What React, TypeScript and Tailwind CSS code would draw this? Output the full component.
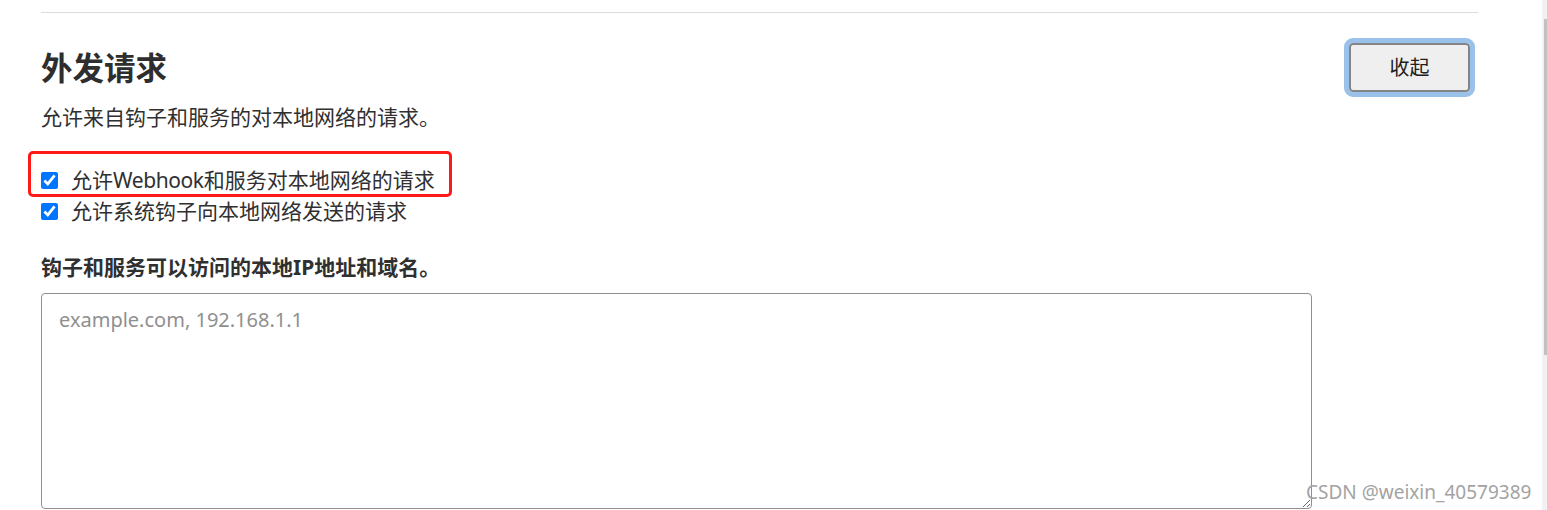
import { useState } from "react";

const font = { fontFamily: '"Noto Sans", "Noto Sans CJK SC", sans-serif' };

export default function App() {
  const [hooks, setHooks] = useState(true);
  const [system, setSystem] = useState(true);

  return (
    <div className="relative flex h-[510px] w-full overflow-hidden bg-white text-[#303030]" style={font}>
      <div className="flex-1 min-w-0 pl-[41px] pr-[64px]">
        <div className="mt-[12px] h-px bg-[#dcdcdc]" />

        <div className="mt-[30px] flex items-center justify-between pr-[8px]">
          <h4 className="text-[31.5px] font-bold leading-none text-[#2e2e2e]">外发请求</h4>
          <button
            type="button"
            className="h-[49px] w-[121px] rounded-[4px] border-2 border-[#858585] bg-[#efefef] text-[20px] text-[#202020] outline outline-[5px] outline-[#99c1e9] outline-offset-0"
            style={font}
          >
            收起
          </button>
        </div>

        <p className="mt-[10px] text-[21px] leading-[31px]">允许来自钩子和服务的对本地网络的请求。</p>

        <div className="relative mt-[32px] text-[21px] leading-[31px]">
          <div className="pointer-events-none absolute left-[-13px] top-[-14px] h-[46px] w-[424px] rounded-[5px] border-[3.5px] border-[#ff1a1a]" />
          <label className="flex items-center gap-[13px]">
            <input
              type="checkbox"
              checked={hooks}
              onChange={() => setHooks(!hooks)}
              className="m-0 h-[17px] w-[17px] accent-[#0075ff]"
            />
            <span>
              允许<span className="tracking-[-0.4px]">Webhook</span>和服务对本地网络的请求
            </span>
          </label>
          <label className="flex items-center gap-[13px]">
            <input
              type="checkbox"
              checked={system}
              onChange={() => setSystem(!system)}
              className="m-0 h-[17px] w-[17px] accent-[#0075ff]"
            />
            <span>允许系统钩子向本地网络发送的请求</span>
          </label>
        </div>

        <div className="mt-[25px] text-[21px] font-bold leading-[31px]">钩子和服务可以访问的本地IP地址和域名。</div>

        <textarea
          placeholder="example.com, 192.168.1.1"
          className="mt-[10px] block h-[216px] w-[1271px] rounded-[4px] border border-[#8f8f8f] px-[17px] py-[12px] text-[20px] leading-[28px] placeholder:text-[#8f8f8f] outline-none"
          style={font}
        />
      </div>

      <div className="w-[5px] shrink-0 bg-[#f1f1f1]">
        <div className="ml-[2px] mt-[19px] h-[336px] w-[3px] bg-[#c1c1c1]" />
      </div>

      <div className="pointer-events-none absolute left-[1306px] top-[478px] text-[19px] text-[#a3a3a3]">
        CSDN @weixin_40579389
      </div>
    </div>
  );
}
